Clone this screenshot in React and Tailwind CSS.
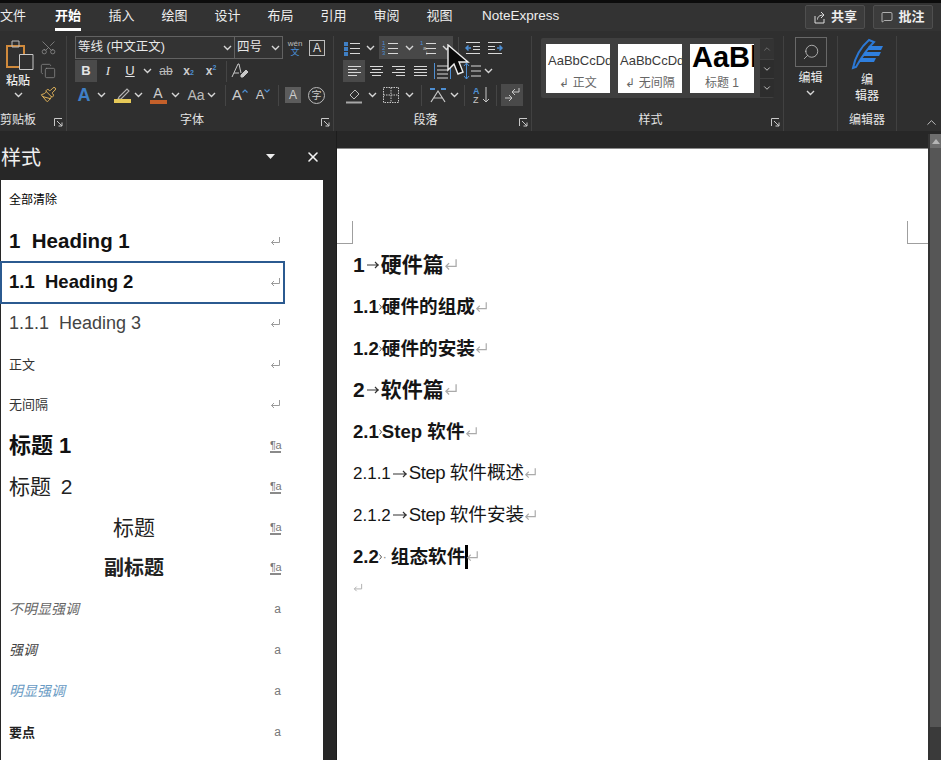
import {
  Scissors, Copy, Paintbrush, Search, ChevronDown, ChevronUp, MessageSquare, X,
} from "lucide-react";

const sans = "font-['Liberation_Sans','Noto_Sans_CJK_SC',sans-serif]";

const tabs = [
  ["文件", "w-[28px] text-left"],
  ["开始", "w-[26px] ml-[27px]"],
  ["插入", "w-[27px] ml-[27px]"],
  ["绘图", "w-[27px] ml-[26px]"],
  ["设计", "w-[27px] ml-[26px]"],
  ["布局", "w-[27px] ml-[26px]"],
  ["引用", "w-[27px] ml-[26px]"],
  ["审阅", "w-[27px] ml-[26px]"],
  ["视图", "w-[27px] ml-[26px]"],
  ["NoteExpress", "w-[80px] ml-[29px] text-left text-[13.5px]"],
];

const Chev = ({ className = "w-[11px]" }) => (
  <span className={`flex justify-center ${className}`}>
    <svg width="9" height="6" viewBox="0 0 9 6" fill="none" stroke="#d6d6d6" strokeWidth="1.4">
      <path d="M1 1l3.5 3.5L8 1" />
    </svg>
  </span>
);

const Launcher = () => (
  <svg width="9" height="9" viewBox="0 0 9 9" fill="none" stroke="#c8c8c8" strokeWidth="1" className="absolute right-[3px] bottom-[4px]">
    <path d="M.5 8V.5H8M3 3l5 5M8 4.5V8H4.5" />
  </svg>
);

const Group = ({ label, labelClass = "text-center", className, children, launcher }) => (
  <div className={`relative flex flex-col h-full border-r border-[#414141] ${className}`}>
    <div className="flex-1 min-h-0">{children}</div>
    <div className={`h-[21px] shrink-0 text-[12px] leading-[20px] text-[#e4e4e4] whitespace-nowrap ${labelClass}`}>{label}</div>
    {launcher && <Launcher />}
  </div>
);

const ListIcon = ({ kind }) => (
  <svg width="18" height="18" viewBox="0 0 18 18">
    {kind === "bullet" &&
      [3, 8, 13].map((y) => <rect key={y} x="1" y={y} width="4" height="4" fill="#3f7fc4" />)}
    {kind === "num" &&
      ["1", "2", "3"].map((t, i) => (
        <text key={t} x="1" y={6 + i * 5} fontSize="6" fill="#4d8fd4">{t}</text>
      ))}
    {kind === "multi" &&
      ["1", "a", "i"].map((t, i) => (
        <text key={t} x={1 + i * 3} y={6 + i * 5} fontSize="6" fill={i === 0 ? "#4d8fd4" : "#bbb"}>{t}</text>
      ))}
    <g stroke="#d8d8d8" strokeWidth="1">
      <path d="M7 4.5h10M7 9.5h10M7 14.5h10" />
    </g>
  </svg>
);

const Align = ({ rows }) => (
  <svg width="16" height="14" viewBox="0 0 16 14" stroke="#d8d8d8" strokeWidth="1">
    {rows.map(([x, w], i) => (
      <path key={i} d={`M${x} ${2.5 + i * 3}h${w}`} />
    ))}
  </svg>
);

const Indent = ({ flip }) => (
  <svg width="16" height="14" viewBox="0 0 16 14" fill="none" strokeWidth="1" className={flip ? "-scale-x-100" : ""}>
    <path d="M1 1.5h14M8 5.5h7M8 8.5h7M1 12.5h14" stroke="#d8d8d8" />
    <path d="M1 7h5M3.5 4.5L1 7l2.5 2.5" stroke="#4d8fd4" strokeWidth="1.5" />
  </svg>
);

const Cell = ({ w, active, className = "", children }) => (
  <div className={`flex items-center justify-center h-[22px] ${w} ${active ? "bg-[#4a4a4a]" : ""} ${className}`}>
    {children}
  </div>
);

const Vsep = ({ ml = "ml-0" }) => <div className={`w-px h-[21px] bg-[#454545] ${ml}`} />;

const Thumb = ({ sample, label, big }) => (
  <div className="w-[64px] h-[49px] bg-white overflow-hidden flex flex-col items-center text-[#3a3a3a]">
    <div className={`w-[64px] overflow-hidden whitespace-nowrap h-[31px] ${big ? "pl-[2px] text-[29px] leading-[27px] font-bold text-black" : "pl-[2px] text-[13px] leading-[33px]"}`}>
      {sample}
    </div>
    <div className="text-[12px] leading-[16px] text-[#666]">{label}</div>
  </div>
);

const ReturnMark = ({ color = "#9a9a9a", size = 11 }) => (
  <svg width={size} height={size} viewBox="0 0 11 11" fill="none" stroke={color} strokeWidth="1" className="shrink-0">
    <path d="M9.5 1v5.5H1.5M4 4L1.5 6.5 4 9" />
  </svg>
);

const ParaLink = () => (
  <span className="text-[11px] leading-[12px] text-[#777] border-b-2 border-[#8a8a8a] tracking-[-.5px]">¶a</span>
);

const styles = [
  { t: "全部清除", c: "text-[12px] text-black" },
  { t: "1  Heading 1", c: "text-[20.5px] font-bold text-[#111] whitespace-pre", m: "ret" },
  { t: "1.1  Heading 2", c: "text-[18.5px] font-bold text-[#111] whitespace-pre", m: "ret", sel: true },
  { t: "1.1.1  Heading 3", c: "text-[18px] text-[#444] whitespace-pre", m: "ret" },
  { t: "正文", c: "text-[13px] text-[#333]", m: "ret" },
  { t: "无间隔", c: "text-[13px] text-[#333]", m: "ret" },
  { t: "标题 1", c: "text-[22px] font-bold text-[#111]", m: "para" },
  { t: "标题 2", c: "text-[21px] text-[#222] [word-spacing:4px]", m: "para" },
  { t: "标题", c: "text-[21px] text-[#222] w-[250px] text-center", m: "para" },
  { t: "副标题", c: "text-[20px] font-bold text-[#222] w-[250px] text-center", m: "para" },
  { t: "不明显强调", c: "text-[14px] italic text-[#666]", m: "a" },
  { t: "强调", c: "text-[14px] italic text-[#444]", m: "a" },
  { t: "明显强调", c: "text-[14px] italic text-[#6a9bc4]", m: "a" },
  { t: "要点", c: "text-[13px] font-bold text-[#222]", m: "a" },
];

const doc = [
  { n: "1", t: "硬件篇", c: "text-[21px] font-bold pb-[2px]", sep: "long" },
  { n: "1.1", t: "硬件的组成", c: "text-[18.6px] font-bold", sep: "tick" },
  { n: "1.2", t: "硬件的安装", c: "text-[18.6px] font-bold", sep: "tick" },
  { n: "2", t: "软件篇", c: "text-[21px] font-bold pb-[2px]", sep: "long" },
  { n: "2.1", t: <span>Step 软件</span>, c: "text-[18.6px] font-bold", sep: "tick" },
  { n: "2.1.1", t: <><span className="tracking-[-.5px]">Step </span>软件概述</>, c: "text-[18.6px]", sep: "mid" },
  { n: "2.1.2", t: <><span className="tracking-[-.5px]">Step </span>软件安装</>, c: "text-[18.6px]", sep: "mid" },
];

// tab mark drawn between the number and the heading text
const TabMark = ({ kind }) => {
  if (kind === "tick") {
    return (
      <svg width="3" height="8" viewBox="0 0 3 8" fill="none" stroke="#555" strokeWidth="1" className="shrink-0">
        <path d="M.5 1.5L2.5 4 .5 6.5" />
      </svg>
    );
  }
  const w = kind === "long" ? 16 : 18;
  return (
    <span className={`flex justify-center shrink-0 ${kind === "long" ? "w-[16px]" : "w-[18px]"}`}>
      <svg width={w - 2} height="10" viewBox={`0 0 ${w - 2} 10`} fill="none" stroke="#333" strokeWidth="1.2">
        <path d={`M1 5h${w - 4}M${w - 7} 2l3 3-3 3`} />
      </svg>
    </span>
  );
};

export default function App() {
  return (
    <div className={`relative w-[941px] h-[760px] overflow-hidden bg-[#333333] flex flex-col ${sans}`}>
      <div className="h-[3px] bg-[#0c0c0c] shrink-0" />

      {/* tabs */}
      <div className="h-[28px] shrink-0 flex items-center bg-[#333333] text-[13px] text-[#eeeeee]">
        {tabs.map(([t, c], i) => (
          <div key={t} className={`relative text-center h-[28px] leading-[26px] whitespace-nowrap ${c} ${i === 1 ? "font-bold text-white" : ""}`}>
            {t}
            {i === 1 && <div className="absolute left-0 right-0 bottom-0 h-[3px] bg-white" />}
          </div>
        ))}
        <div className="ml-auto mr-[8px] flex gap-[8px] font-bold">
          <div className="w-[60px] h-[24px] flex items-center justify-center gap-[5px] bg-[#3c3c3c] border border-[#4f4f4f] rounded-[2px] text-[13px]">
            <svg width="13" height="13" viewBox="0 0 13 13" fill="none" stroke="#dddddd" strokeWidth="1">
              <path d="M2 5v7h9V8M4.5 8.5c0-3 2.5-4.5 6-4.5M8 1l3 3-3 3" />
            </svg>
            共享
          </div>
          <div className="w-[60px] h-[24px] flex items-center justify-center gap-[5px] bg-[#3c3c3c] border border-[#4f4f4f] rounded-[2px] text-[13px]">
            <MessageSquare size={12} strokeWidth={1.3} />
            批注
          </div>
        </div>
      </div>

      {/* ribbon */}
      <div className="h-[100px] shrink-0 flex bg-[#2f2f2f] pt-[5px] text-[#e4e4e4]">
        <Group label="剪贴板" labelClass="text-left" launcher className="w-[67px]">
          <div className="flex h-full">
            <div className="w-[36px] flex flex-col items-center pt-[4px]">
              <svg width="28" height="31" viewBox="0 0 28 31" fill="none" className="ml-[3px]">
                <path d="M1 6h17v21H1z" stroke="#d08a3c" strokeWidth="2" />
                <path d="M6 1h7v6H6z" stroke="#bdbdbd" />
                <path d="M13.5 14.5h13.5v15H13.5z" fill="#2f2f2f" stroke="#c8c8c8" />
              </svg>
              <span className="text-[12px] leading-[14px] mt-[3px] font-medium whitespace-nowrap text-[#eee]">粘贴</span>
              <Chev className="w-[11px] mt-[4px]" />
            </div>
            <div className="flex flex-col items-center w-[20px] ml-[2px] gap-[7px] pt-[3px]">
              <Scissors size={17} strokeWidth={1.1} color="#8f8f8f" className="-rotate-90" />
              <Copy size={16} strokeWidth={1.1} color="#8f8f8f" />
              <Paintbrush size={17} strokeWidth={1.4} color="#e0b25a" />
            </div>
          </div>
        </Group>

        <Group label="字体" labelClass="text-center pr-[16px]" launcher className="w-[267px]">
          <div className="pl-[8px] flex flex-col">
            <div className="flex items-center h-[23px]">
              <div className="flex w-[208px] h-[23px] border border-[#626262] bg-[#333333] text-[12.5px]">
                <div className="flex-1 flex items-center justify-between pl-[2px] pr-[1px] border-r border-[#626262] text-[#e8e8e8]">
                  等线 (中文正文)
                  <Chev />
                </div>
                <div className="w-[47px] flex items-center justify-between pl-[2px] pr-[1px] text-[#e8e8e8]">
                  四号
                  <Chev />
                </div>
              </div>
              <div className="w-[16px] ml-[4px] flex flex-col items-center leading-[9px] text-[8px]">
                <span className="text-[#bbb]">wén</span>
                <span className="text-[#4a8fd8] text-[9px]">文</span>
              </div>
              <div className="ml-[6px] w-[16px] h-[16px] border border-[#bdbdbd] flex items-center justify-center text-[12px] text-[#ddd]">A</div>
            </div>
            <div className="flex items-center h-[22px] mt-[1px]">
              <Cell w="w-[22px]" active className="font-bold text-[13px]">B</Cell>
              <Cell w="w-[22px]" className="italic text-[13px] font-['Liberation_Serif',serif]">I</Cell>
              <Cell w="w-[22px]" className="underline text-[13px]">U</Cell>
              <Chev className="w-[9px] ml-[2px]" />
              <Cell w="w-[24px]" className="ml-[2px] line-through text-[12px] text-[#bbb]">ab</Cell>
              <Cell w="w-[21px]" className="text-[12px] font-bold text-[#ccc]">x<sub className="text-[7px] text-[#4d8fd4]">2</sub></Cell>
              <Cell w="w-[24px]" className="text-[12px] font-bold text-[#ccc]">x<sup className="text-[7px] text-[#4d8fd4]">2</sup></Cell>
              <Vsep ml="ml-[3px]" />
              <Cell w="w-[26px]" className="text-[15px] text-[#ccc]">
                <svg width="18" height="16" viewBox="0 0 18 16" fill="none" stroke="#c8c8c8" strokeWidth="1">
                  <path d="M1 14L7 1h1l2 9M3 10h5" />
                  <path d="M10 12l5-5 2 2-5 5h-2z" fill="#c8c8c8" />
                </svg>
              </Cell>
            </div>
            <div className="flex items-center h-[22px] mt-[2px]">
              <Cell w="w-[24px]" className="ml-[-3px] font-bold text-[18px] text-[#3f7fc4]">A</Cell>
              <Chev />
              <div className="w-[22px] ml-[4px] flex flex-col items-center">
                <svg width="18" height="12" viewBox="0 0 18 12" fill="none" stroke="#b5b5b5" strokeWidth="1.1">
                  <path d="M6 10l8-8 2 2-8 8H5z" />
                </svg>
                <div className="w-[17px] h-[4px] bg-[#e6c958]" />
              </div>
              <Chev />
              <div className="w-[20px] ml-[4px] flex flex-col items-center text-[14px] leading-[14px] text-[#ccc]">
                A
                <div className="w-[17px] h-[4px] bg-[#c4602a]" />
              </div>
              <Chev className="w-[11px] ml-[2px]" />
              <Cell w="w-[20px]" className="ml-[5px] text-[14px] text-[#bbb] whitespace-nowrap">Aa</Cell>
              <Chev />
              <Vsep ml="ml-[8px]" />
              <Cell w="w-[20px]" className="ml-[4px] text-[15px] text-[#ccc]">
                A
                <svg width="6" height="4" viewBox="0 0 6 4" fill="none" stroke="#4d8fd4" strokeWidth="1.2" className="-mt-[8px]"><path d="M.5 3.5L3 1l2.5 2.5" /></svg>
              </Cell>
              <Cell w="w-[20px]" className="ml-[3px] text-[13px] text-[#ccc]">
                A
                <svg width="6" height="4" viewBox="0 0 6 4" fill="none" stroke="#4d8fd4" strokeWidth="1.2" className="-mt-[8px]"><path d="M.5.5L3 3l2.5-2.5" /></svg>
              </Cell>
              <Vsep ml="ml-[5px]" />
              <div className="ml-[6px] w-[16px] h-[16px] bg-[#5c5c5c] flex items-center justify-center text-[12px] text-[#ccc]">A</div>
              <div className="ml-[7px] w-[17px] h-[17px] rounded-full border border-[#bbb] flex items-center justify-center text-[10px] text-[#ccc]">字</div>
            </div>
          </div>
        </Group>

        <Group label="段落" labelClass="text-center pr-[14px]" launcher className="w-[198px]">
          <div className="pl-[6px] flex flex-col">
            <div className="flex items-center h-[23px]">
              <Cell w="w-[24px]"><ListIcon kind="bullet" /></Cell>
              <Chev className="w-[12px]" />
              <div className="flex items-center ml-[3px] bg-[#484848] h-[23px]">
                <Cell w="w-[22px]"><ListIcon kind="num" /></Cell>
                <Chev className="w-[16px]" />
                <Cell w="w-[22px]"><ListIcon kind="multi" /></Cell>
                <Chev className="w-[14px]" />
              </div>
              <Vsep ml="ml-[5px]" />
              <Cell w="w-[22px]" className="ml-[3px]"><Indent /></Cell>
              <Cell w="w-[22px]"><Indent flip /></Cell>
            </div>
            <div className="flex items-center h-[22px] mt-[1px]">
              <Cell w="w-[22px]" active className="ml-[3px]"><Align rows={[[2, 13], [2, 9], [2, 13], [2, 9]]} /></Cell>
              <Cell w="w-[22px]"><Align rows={[[2, 13], [4, 9], [2, 13], [4, 9]]} /></Cell>
              <Cell w="w-[22px]"><Align rows={[[2, 13], [6, 9], [2, 13], [6, 9]]} /></Cell>
              <Cell w="w-[22px]"><Align rows={[[2, 13], [2, 13], [2, 13], [2, 13]]} /></Cell>
              <Cell w="w-[22px]">
                <svg width="17" height="18" viewBox="0 0 17 18" fill="none" strokeWidth="1">
                  <path d="M.5 1v16M16.5 1v16" stroke="#4d8fd4" />
                  <path d="M3 4h11M3 8h11M3 12h11M3 16h11" stroke="#d8d8d8" />
                </svg>
              </Cell>
              <Cell w="w-[22px]" className="ml-[8px]">
                <svg width="18" height="18" viewBox="0 0 18 18" fill="none" strokeWidth="1">
                  <path d="M3.5 1v16M1 4l2.5-3L6 4M1 14l2.5 3L6 14" stroke="#4d8fd4" />
                  <path d="M8 4h10M8 9h10M8 14h10" stroke="#d8d8d8" />
                </svg>
              </Cell>
              <Chev />
            </div>
            <div className="flex items-center h-[22px] mt-[2px]">
              <Cell w="w-[24px]" className="ml-[2px]">
                <svg width="18" height="18" viewBox="0 0 18 18" fill="none" stroke="#bdbdbd" strokeWidth="1">
                  <path d="M5 9l5-5 4 4-5 5z" />
                  <path d="M1 16.5h16" stroke="#a8a8a8" strokeWidth="2" />
                </svg>
              </Cell>
              <Chev className="w-[12px]" />
              <Cell w="w-[24px]" className="ml-[1px]">
                <svg width="16" height="16" viewBox="0 0 16 16" fill="none" stroke="#c8c8c8" strokeWidth="1" strokeDasharray="1.5 1">
                  <path d="M.5.5h15v15H.5zM8 .5v15M.5 8h15" />
                </svg>
              </Cell>
              <Chev className="w-[12px]" />
              <Vsep ml="ml-[6px]" />
              <Cell w="w-[24px]" className="ml-[4px]">
                <svg width="20" height="18" viewBox="0 0 20 18" fill="none" strokeWidth="1.2">
                  <path d="M3 16L10 5l7 11M6 12h8" stroke="#c8c8c8" />
                  <path d="M2 3h5M13 3h5" stroke="#4d8fd4" strokeWidth="2" />
                </svg>
              </Cell>
              <Chev className="w-[9px]" />
              <Vsep ml="ml-[5px]" />
              <Cell w="w-[22px]" className="ml-[6px]">
                <svg width="18" height="18" viewBox="0 0 18 18" fill="none" strokeWidth="1">
                  <text x="0" y="8" fontSize="9" fontWeight="700" fill="#4d8fd4" stroke="none">A</text>
                  <text x="0" y="17" fontSize="9" fill="#c8c8c8" stroke="none">Z</text>
                  <path d="M13 1v15M10 13l3 3 3-3" stroke="#c8c8c8" />
                </svg>
              </Cell>
              <Vsep ml="ml-[3px]" />
              <Cell w="w-[22px]" active className="ml-[4px]">
                <svg width="16" height="16" viewBox="0 0 16 16" fill="none" stroke="#c8c8c8" strokeWidth="1">
                  <path d="M1 11h7M5 8l3 3-3 3M15 1v4H8M11 2L8 5l3 3" />
                </svg>
              </Cell>
            </div>
          </div>
        </Group>

        <Group label="样式" labelClass="text-center pr-[14px]" launcher className="w-[252px]">
          <div className="pl-[9px] pt-[2px]">
            <div className="w-[233px] h-[60px] bg-[#3f3f3f] flex items-center pl-[5px] gap-[8px] rounded-[2px]">
              <Thumb sample="AaBbCcDd" label="↲ 正文" />
              <Thumb sample="AaBbCcDd" label="↲ 无间隔" />
              <Thumb sample="AaBl" label="标题 1" big />
              <div className="w-[14px] ml-[-2px] flex flex-col gap-[1px]">
                <div className="h-[20px] bg-[#333333] flex items-center justify-center"><ChevronUp size={10} color="#777" /></div>
                <div className="h-[18px] bg-[#2d2d2d] flex items-center justify-center"><ChevronDown size={10} color="#ddd" /></div>
                <div className="h-[18px] bg-[#2d2d2d] flex items-center justify-center"><ChevronDown size={10} color="#ddd" /></div>
              </div>
            </div>
          </div>
        </Group>

        <Group label="" className="w-[54px]">
          <div className="flex flex-col items-center pt-[1px]">
            <div className="w-[32px] h-[30px] border border-[#686868] flex items-center justify-center">
              <Search size={18} strokeWidth={1} color="#cfcfcf" className="-scale-x-100" />
            </div>
            <span className="mt-[4px] text-[12px] leading-[14px] text-[#eee]">编辑</span>
            <Chev className="w-[11px] mt-[5px]" />
          </div>
        </Group>

        <Group label="编辑器" className="w-[59px]">
          <div className="flex flex-col items-center pt-[2px]">
            <svg width="34" height="32" viewBox="0 0 34 32" fill="none">
              <path d="M3 30C5 20 11 9 19 2l5 2C17 11 10 22 6 29z" stroke="#2c78d4" strokeWidth="2" />
              <path d="M15 14h16l-2 4H13zM19 8h14l-2 4H17zM11 20h15l-2 4H9z" fill="#2f7fde" />
            </svg>
            <span className="mt-[2px] text-[12px] leading-[16px] text-[#eee] text-center">编<br />辑器</span>
          </div>
        </Group>

        <div className="flex-1 flex items-end justify-end pr-[2px] pb-[1px]">
          <ChevronUp size={15} strokeWidth={1.4} color="#cfcfcf" />
        </div>
      </div>

      {/* main */}
      <div className="flex-1 min-h-0 flex">
        <div className="w-[337px] shrink-0 flex flex-col bg-[#272727] border-r border-[#1d1d1d]">
          <div className="h-[49px] shrink-0 flex items-start pt-[15px] text-[#eeeeee] pl-[1px]">
            <span className="text-[20px] leading-[24px]">样式</span>
            <svg width="9" height="6" viewBox="0 0 9 6" className="ml-[225px] mt-[8px]">
              <path d="M0 0h9L4.5 5z" fill="#eee" />
            </svg>
            <X size={16} strokeWidth={2.4} color="#f2f2f2" className="ml-[30px] mt-[3px]" />
          </div>
          <div className="flex-1 ml-[1px] w-[322px] bg-white">
            {styles.map((s) => (
              <div
                key={s.t}
                className={`h-[40.9px] flex items-center pl-[8px] w-[283px] pr-[3px] ${s.sel ? "outline-2 -outline-offset-1 outline-[#2b5a90]" : ""}`}
              >
                <span className={`leading-none ${s.c}`}>{s.t}</span>
                <span className="ml-auto w-[16px] flex justify-end">
                  {s.m === "ret" && <ReturnMark />}
                  {s.m === "para" && <ParaLink />}
                  {s.m === "a" && <span className="text-[12px] text-[#777]">a</span>}
                </span>
              </div>
            ))}
          </div>
        </div>

        <div className="flex-1 min-w-0 flex flex-col">
          <div className="h-[18px] shrink-0 bg-[#272727] border-b border-[#8a8a8a]" />
          <div className="flex-1 min-h-0 flex">
            <div className="w-[591px] bg-white">
              <div className="h-[72px]" />
              <div className="flex justify-between">
                <div className="w-[16px] h-[23px] border-r border-b border-[#9f9f9f]" />
                <div className="w-[21px] h-[23px] border-l border-b border-[#9f9f9f]" />
              </div>
              <div className="pl-[16px] pt-[1px] text-[#151515]">
                {doc.map((d) => (
                  <div key={d.n} className={`h-[41.6px] flex items-center leading-none whitespace-nowrap ${d.c}`}>
                    <span className={d.n.length === 5 ? "text-[17px]" : ""}>{d.n}</span>
                    <TabMark kind={d.sep} />
                    <span>{d.t}</span>
                    <ReturnMark size={d.n.length === 1 ? 14 : 13} color="#aaaaaa" />
                  </div>
                ))}
                <div className="h-[41.6px] flex items-center leading-none text-[18.6px] font-bold whitespace-nowrap">
                  <span>2.2</span>
                  <span className="w-[12px] flex items-center">
                    <TabMark kind="tick" />
                    <span className="ml-[1px] text-[12px] font-normal text-[#888]">·</span>
                  </span>
                  <span>组态软件</span>
                  <span className="w-[3px] h-[24px] bg-black" />
                  <span className="-ml-[2px]"><ReturnMark size={13} color="#aaaaaa" /></span>
                </div>
                <div className="h-[20px] flex items-center">
                  <ReturnMark size={10} color="#aaaaaa" />
                </div>
              </div>
            </div>
            <div className="w-[13px] bg-[#565656] -mt-[15px] flex flex-col border-l-2 border-[#333333]">
              <div className="h-[14px] bg-[#6e6e6e] flex items-center justify-center">
                <svg width="8" height="5" viewBox="0 0 8 5"><path d="M0 5L4 0l4 5z" fill="#b5b5b5" /></svg>
              </div>
              <div className="flex-1" />
              <div className="h-[33px] bg-[#3a3a3a]" />
            </div>
          </div>
        </div>
      </div>

      {/* mouse pointer */}
      <svg width="24" height="34" viewBox="0 0 24 34" className="absolute left-[446px] top-[44px]">
        <path d="M2 1v25l6-6 4 10 5-2-4-10h9z" fill="#0a0a0a" stroke="#eeeeee" strokeWidth="1.4" />
      </svg>
    </div>
  );
}
